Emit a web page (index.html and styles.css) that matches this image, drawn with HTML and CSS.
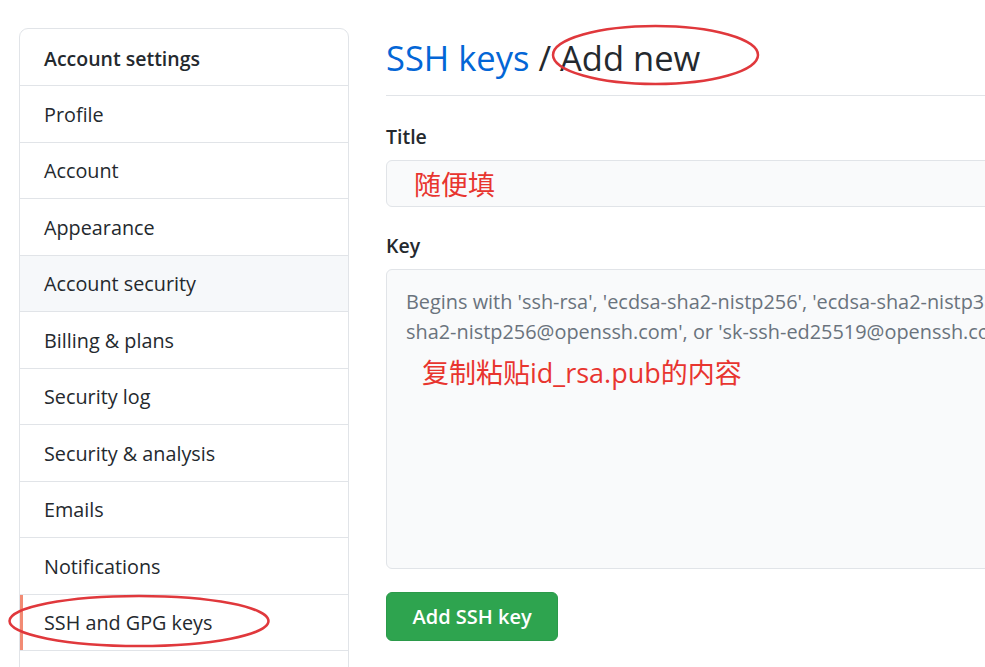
FILE: index.html
```html
<!DOCTYPE html>
<html>
<head>
<meta charset="utf-8">
<link rel="stylesheet" href="styles.css">
</head>
<body>
<div class="layout">
  <nav class="menu">
    <div class="menu-head">Account settings</div>
    <a class="menu-item">Profile</a>
    <a class="menu-item">Account</a>
    <a class="menu-item">Appearance</a>
    <a class="menu-item hover">Account security</a>
    <a class="menu-item">Billing &amp; plans</a>
    <a class="menu-item">Security log</a>
    <a class="menu-item">Security &amp; analysis</a>
    <a class="menu-item">Emails</a>
    <a class="menu-item">Notifications</a>
    <a class="menu-item selected">SSH and GPG keys</a>
    <div class="menu-item empty"></div>
  </nav>
  <main class="main">
    <h1 class="title"><a class="crumb">SSH keys</a> / Add new</h1>
    <label class="label label-title">Title</label>
    <div class="input"><span class="note note-title">随便填</span></div>
    <label class="label label-key">Key</label>
    <div class="textarea">
      <div class="placeholder">Begins with 'ssh-rsa', 'ecdsa-sha2-nistp256', 'ecdsa-sha2-nistp384', 'ecdsa-sha2-nistp521', 'ssh-ed25519', 'sk-ecdsa-<br>sha2-nistp256@openssh.com', or 'sk-ssh-ed25519@openssh.com'</div>
      <div class="note note-key">复制粘贴id_rsa.pub的内容</div>
    </div>
    <button class="btn">Add SSH key</button>
  </main>
</div>
<svg class="ring ring-top" width="215" height="66" viewBox="0 0 215 66"><ellipse cx="107.5" cy="33" rx="102.5" ry="29" fill="none" stroke="#e0383c" stroke-width="2.5"/></svg>
<svg class="ring ring-side" width="270" height="60" viewBox="0 0 270 60"><ellipse cx="135" cy="30" rx="129.5" ry="25" fill="none" stroke="#e0383c" stroke-width="2.5"/></svg>
</body>
</html>
```
FILE: styles.css
```css
html, body {
  margin: 0;
  padding: 0;
  background: #fff;
  overflow: hidden;
  width: 985px;
  height: 667px;
}
body {
  font-family: "Open Sans", "Noto Sans CJK SC", sans-serif;
  color: #24292e;
  position: relative;
}
.layout {
  display: flex;
  gap: 37px;
  padding: 28px 0 0 19px;
  width: 1300px;
}
.menu {
  width: 328px;
  flex: none;
  border: 1px solid #e1e4e8;
  border-radius: 9px;
  display: flex;
  flex-direction: column;
  align-self: flex-start;
}
.menu-head {
  font-weight: 600;
  font-size: 19.5px;
  line-height: 29px;
  padding: 15px 24px 12px;
  border-bottom: 1px solid #e1e4e8;
}
.menu-item {
  font-size: 19.8px;
  line-height: 29.5px;
  padding: 13.5px 24px 12.5px;
  border-bottom: 1px solid #e1e4e8;
  color: #24292e;
}
.menu-item.empty {
  height: 29.5px;
}
.menu-item.hover {
  background: #f6f8fa;
}
.menu-item.selected {
  box-shadow: inset 3px 0 0 #f28b74;
}
.main {
  width: 860px;
  flex: none;
  display: flex;
  flex-direction: column;
  align-items: flex-start;
}
.title {
  align-self: stretch;
  margin: 0;
  font-size: 34.5px;
  font-weight: 400;
  line-height: 48px;
  padding: 6px 0 13px;
  border-bottom: 1px solid #e1e4e8;
}
.crumb {
  color: #0366d6;
}
.label {
  font-weight: 600;
  font-size: 19.5px;
  line-height: 28px;
  margin-bottom: 9px;
}
.label-title {
  margin-top: 27px;
}
.label-key {
  margin-top: 25px;
}
.input {
  align-self: stretch;
  height: 45px;
  background: #f9fafb;
  border: 1px solid #e1e4e8;
  border-radius: 6px;
  display: flex;
  align-items: center;
  padding-left: 27px;
}
.note {
  color: #e8352f;
  font-family: "Noto Sans CJK SC", sans-serif;
}
.note-title {
  font-size: 27px;
}
.textarea {
  align-self: stretch;
  background: #f9fafb;
  border: 1px solid #e1e4e8;
  border-radius: 6px;
  padding: 17px 19px 15px;
  box-sizing: border-box;
  height: 300px;
}
.placeholder {
  color: #6a737d;
  font-size: 19.9px;
  line-height: 30px;
  white-space: nowrap;
}
.note-key {
  font-size: 27px;
  line-height: 40px;
  padding-left: 16px;
  margin-top: 6px;
  font-family: "Open Sans", "Noto Sans CJK SC", sans-serif;
}
.btn {
  margin-top: 23px;
  background: #2ea44f;
  color: #fff;
  border: 1px solid #2b9a4a;
  border-radius: 6px;
  font-family: "Open Sans", sans-serif;
  font-weight: 600;
  font-size: 20px;
  height: 49px;
  padding: 0 25.5px;
}
.ring {
  position: absolute;
}
.ring-top {
  left: 548px;
  top: 22px;
}
.ring-side {
  left: 4px;
  top: 591px;
}
```
